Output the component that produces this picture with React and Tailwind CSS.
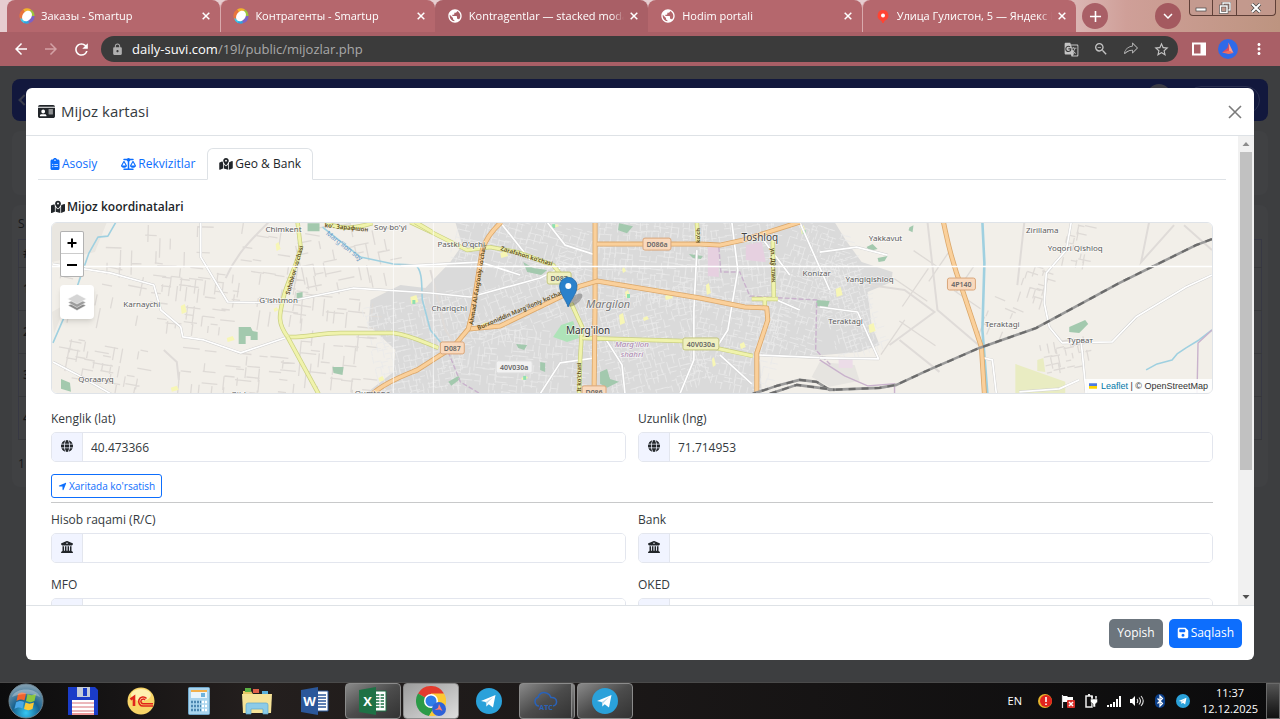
import { useId, useState } from "react";
import clsx from "clsx";
import {
  FaBuildingColumns,
  FaClipboardList,
  FaFloppyDisk,
  FaGlobe,
  FaIdCard,
  FaLocationArrow,
  FaMapLocationDot,
  FaScaleBalanced,
} from "react-icons/fa6";
import {
  MdAdd,
  MdArrowBack,
  MdArrowForward,
  MdGTranslate,
  MdKeyboardArrowDown,
  MdLock,
  MdMoreVert,
  MdOutlineZoomOut,
  MdPublic,
  MdRefresh,
  MdStarBorder,
} from "react-icons/md";
import { PiShareFatLight } from "react-icons/pi";

/* ---------- Browser chrome ---------- */

const browserTabs = [
  { title: "Заказы - Smartup", icon: "smartup" },
  { title: "Контрагенты - Smartup", icon: "smartup" },
  { title: "Kontragentlar — stacked modal", icon: "globe", active: true },
  { title: "Hodim portali", icon: "globe" },
  { title: "Улица Гулистон, 5 — Яндекс Карты", icon: "pin" },
];

function Favicon({ kind }) {
  if (kind === "globe") {
    return <MdPublic size={16} className="shrink-0 text-white" />;
  }
  if (kind === "pin") {
    return (
      <svg viewBox="0 0 16 16" className="size-4 shrink-0">
        <path d="M8 2a5.500 5.500 0 0 1 2.600 10.300c-1 .6-1.600 1.400-1.800 2.700H7.200c-.2-1.300-.8-2.100-1.800-2.700A5.500 5.500 0 0 1 8 2z" fill="#f43" />
        <circle cx="8" cy="7.400" r="2" fill="#fff" />
      </svg>
    );
  }
  return (
    <svg viewBox="0 0 16 16" className="size-4 shrink-0">
      <path d="M8 8L4 1.500A7.500 7.500 0 0 1 12 1.600z" fill="#f3b32c" />
      <path d="M8 8l4-6.400A7.500 7.500 0 0 1 15.500 8z" fill="#9cc43c" />
      <path d="M8 8h7.500A7.500 7.500 0 0 1 10 15.300z" fill="#7d62c4" />
      <path d="M8 8l2 7.300A7.500 7.500 0 0 1 2 12.500z" fill="#2fa3e0" />
      <path d="M8 8l-6 4.500A7.500 7.500 0 0 1 4 1.500z" fill="#e8743c" />
      <path d="M1 10a7 7 0 0 0 4 5l1-3z" fill="#42c7e8" />
      <ellipse cx="8" cy="8" rx="4.400" ry="5.800" transform="rotate(38 8 8)" fill="#fff" />
    </svg>
  );
}

function WindowButtons() {
  return (
    <div className="flex h-4 self-start rounded-b border border-t-0 border-[#5f4038] bg-[#c39a90]/70 text-white">
      <button aria-label="Minimize" className="flex w-[23px] items-center justify-center border-r border-[#5f4038]">
        <svg viewBox="0 0 12 10" className="h-2.5 w-3">
          <rect x="1" y="5" width="10" height="3" fill="#fff" stroke="#444" strokeWidth=".7" />
        </svg>
      </button>
      <button aria-label="Restore" className="flex w-6 items-center justify-center border-r border-[#5f4038]">
        <svg viewBox="0 0 12 12" className="size-3" fill="none">
          <path d="M4 3V1h7v7H9" stroke="#444" strokeWidth="2.600" />
          <path d="M4 3V1h7v7H9" stroke="#fff" strokeWidth="1.400" />
          <rect x="1.500" y="4" width="6.500" height="6.500" stroke="#444" strokeWidth="2.600" />
          <rect x="1.500" y="4" width="6.500" height="6.500" stroke="#fff" strokeWidth="1.500" />
        </svg>
      </button>
      <button aria-label="Close window" className="flex w-[38px] items-center justify-center">
        <svg viewBox="0 0 12 10" className="h-2.5 w-3" fill="none">
          <path d="M2 1l8 8M10 1L2 9" stroke="#444" strokeWidth="3.400" />
          <path d="M2 1l8 8M10 1L2 9" stroke="#fff" strokeWidth="2" />
        </svg>
      </button>
    </div>
  );
}

function TabStrip() {
  return (
    <div className="flex h-8 items-center bg-linear-to-r from-[#e6cdd0] from-80% via-[#cf9f98] via-88% to-[#bd9480] pr-1 pl-[7px]">
      <div className="flex h-8 w-[1069px] min-w-0 shrink">
        {browserTabs.map((tab, i) => (
          <div
            key={tab.title}
            className={clsx(
              "flex min-w-0 flex-1 items-center gap-1.5 rounded-t-lg pr-1.5 pl-3",
              tab.active ? "bg-[#a95f66]" : "bg-[#b5676d]",
              (i === 1 || i === 4) && "border-l border-[#d9a9ac]"
            )}
          >
            <Favicon kind={tab.icon} />
            <a
              href="#tab"
              className="flex-1 overflow-hidden text-[11px] leading-4 whitespace-nowrap text-white [mask-image:linear-gradient(to_right,black_92%,transparent)]"
            >
              {tab.title}
            </a>
            <button aria-label="Close tab" className="-ml-1 flex size-4 items-center justify-center text-white">
              <svg viewBox="0 0 8 8" className="size-2">
                <path d="M.7 .7l6.600 6.600M7.300 .7L.7 7.300" stroke="currentColor" strokeWidth="1.500" />
              </svg>
            </button>
          </div>
        ))}
      </div>
      <button aria-label="New tab" className="ml-1.5 flex size-[26px] items-center justify-center rounded-full bg-[#a95f66] text-white">
        <MdAdd size={19} />
      </button>
      <button aria-label="Search tabs" className="mr-2 ml-auto flex size-[26px] items-center justify-center rounded-full bg-[#a4595f] text-white">
        <MdKeyboardArrowDown size={18} />
      </button>
      <WindowButtons />
    </div>
  );
}

function Toolbar() {
  return (
    <div className="flex h-[34px] items-center bg-[#a95f66] px-3 text-white">
      <div className="flex w-[89px] items-center gap-3">
        <button aria-label="Back"><MdArrowBack size={18} /></button>
        <button aria-label="Forward" className="text-[#d3a1a5]"><MdArrowForward size={18} /></button>
        <button aria-label="Reload"><MdRefresh size={19} /></button>
      </div>
      <div className="flex h-[26px] flex-1 items-center rounded-full bg-[#3b3b3b] pr-2 pl-2.5 text-[#a9a9a9]">
        <MdLock size={13} className="mr-2 text-[#b0b0b0]" />
        <p className="flex-1 text-[13px] leading-5">
          <span className="text-white">daily-suvi.com</span>/19l/public/mijozlar.php
        </p>
        <div className="flex items-center gap-3.5 text-[#c4c4c4]">
          <button aria-label="Translate"><MdGTranslate size={15} /></button>
          <button aria-label="Zoom"><MdOutlineZoomOut size={16} /></button>
          <button aria-label="Share"><PiShareFatLight size={16} /></button>
          <button aria-label="Bookmark"><MdStarBorder size={17} /></button>
        </div>
      </div>
      <button aria-label="Side panel" className="ml-3.5">
        <svg viewBox="0 0 14 14" className="size-3.5">
          <rect x="1" y="1.500" width="12" height="11" fill="none" stroke="#fff" strokeWidth="2" />
          <rect x="8.500" y="1" width="5" height="12" fill="#fff" />
        </svg>
      </button>
      <button aria-label="Profile" className="mx-3">
        <BirdBadge className="size-5" />
      </button>
      <button aria-label="Menu"><MdMoreVert size={18} /></button>
    </div>
  );
}

function BirdBadge({ className }) {
  return (
    <svg viewBox="0 0 20 20" className={className}>
      <circle cx="10" cy="10" r="10" fill="#2f6ae8" />
      <path d="M10.500 3.500l5 10.500-4.500-2z" fill="#ff9a86" />
      <path d="M10.500 3.500L11 12l-7 1.500L9.500 9z" fill="#e5485a" />
      <path d="M4 13.500l7-2 4.500 2.500-5 1z" fill="#f0705f" />
    </svg>
  );
}

/* ---------- Map ---------- */

// small repeatable generator so the street grid stays the same on each render
function makeStreets(seed, { x, y, w, h, angle, step, keep }) {
  let s = seed;
  const rnd = () => {
    s = (s * 16807) % 2147483647;
    return s / 2147483647;
  };
  const ca = Math.cos(angle);
  const sa = Math.sin(angle);
  const cx = x + w / 2;
  const cy = y + h / 2;
  const at = (u, v) =>
    `${(cx + u * ca - v * sa).toFixed(1)} ${(cy + u * sa + v * ca).toFixed(1)}`;
  let d = "";
  for (let u = -w / 2; u < w / 2; u += step) {
    for (let v = -h / 2; v < h / 2; v += step) {
      const du = (rnd() - 0.5) * step * 0.5;
      if (rnd() < keep) d += `M${at(u + du, v)}L${at(u + du, v + step * (0.7 + rnd()))}`;
      if (rnd() < keep) d += `M${at(u, v + du)}L${at(u + step * (0.7 + rnd()), v + du)}`;
    }
  }
  return d;
}

const cityBlocks = [
  { x: 372, y: 300, w: 90, h: 96, angle: -0.2, step: 6, keep: 0.65 },
  { x: 455, y: 218, w: 140, h: 60, angle: 0.25, step: 7, keep: 0.65 },
  { x: 455, y: 270, w: 140, h: 60, angle: -0.35, step: 7, keep: 0.65 },
  { x: 455, y: 330, w: 130, h: 66, angle: 0.1, step: 7, keep: 0.65 },
  { x: 597, y: 220, w: 110, h: 80, angle: 0.08, step: 6, keep: 0.65 },
  { x: 590, y: 295, w: 110, h: 100, angle: -0.25, step: 6, keep: 0.65 },
  { x: 700, y: 220, w: 80, h: 80, angle: -0.12, step: 7, keep: 0.6 },
  { x: 695, y: 300, w: 80, h: 90, angle: 0.2, step: 6, keep: 0.65 },
  { x: 775, y: 225, w: 60, h: 130, angle: 0.3, step: 6, keep: 0.65 },
  { x: 825, y: 260, w: 50, h: 95, angle: -0.3, step: 5, keep: 0.65 },
].map((block, i) => makeStreets(i * 977 + 31, block));

const villageBlocks = [
  { x: 150, y: 270, w: 85, h: 55, angle: 0.12, step: 9, keep: 0.4 },
  { x: 105, y: 225, w: 95, h: 40, angle: 0.03, step: 13, keep: 0.25 },
  { x: 60, y: 270, w: 90, h: 50, angle: 0.2, step: 13, keep: 0.35 },
  { x: 55, y: 345, w: 90, h: 45, angle: 0.18, step: 9, keep: 0.42 },
  { x: 180, y: 355, w: 100, h: 36, angle: 0.1, step: 11, keep: 0.4 },
  { x: 238, y: 228, w: 70, h: 95, angle: 0.15, step: 12, keep: 0.4 },
  { x: 300, y: 225, w: 90, h: 60, angle: -0.2, step: 11, keep: 0.4 },
  { x: 300, y: 300, w: 70, h: 90, angle: 0.1, step: 11, keep: 0.35 },
  { x: 1025, y: 268, w: 25, h: 30, angle: 0.3, step: 7, keep: 0.5 },
  { x: 1068, y: 225, w: 25, h: 38, angle: 0.2, step: 7, keep: 0.5 },
  { x: 1045, y: 340, w: 45, h: 35, angle: -0.2, step: 7, keep: 0.4 },
  { x: 987, y: 302, w: 28, h: 35, angle: 0.4, step: 7, keep: 0.45 },
  { x: 890, y: 240, w: 60, h: 110, angle: 0.6, step: 28, keep: 0.3 },
].map((block, i) => makeStreets(i * 613 + 7, block));

const yellowRoads = [
  "M297 222L300 247C297 265 287 280 283 297S276 322 287 337C305 338 318 333 340 333H393C410 335 425 343 438 348",
  "M287 337L318 394",
  "M325 222C335 228 350 230 372 223M410 222L433 233 467 250 490 247 517 252 553 265 565 280",
  "M415 222L432 232",
  "M571 303L582 327 580 360 579 394",
  "M582 338L683 341 720 349 753 356",
  "M697 222L698 244",
  "M773 240L774 297M752 299H778M765 297V308",
];

const orangeRoads = [
  "M595 222V300L594 394",
  "M597 244L700 244 720 245 743 240 800 222",
  "M468 329L500 326 560 297 580 286 597 281 633 287 700 298 745 307 767 308 768 320 757 353 757 394",
  "M501 222C490 232 485 240 482 250L472 313 468 329 453 347 417 370C405 375 385 382 372 394",
  "M944 222C948 240 950 255 963 290L982 347 985 394",
];

const whiteRoads = [
  "M52 264L110 273 153 285 160 310 180 327 182 337 203 340 240 353 287 337",
  "M200 222V257L227 302 280 303 353 288 430 293 470 297 540 278 560 268",
  "M52 362L75 374 110 394M400 266L480 262 520 275",
  "M547 222L565 245 593 254M500 222L530 260",
  "M540 394L560 363 595 358M605 338L622 365 625 394",
  "M697 250L694 310 694 360 680 394M732 222L738 270 728 330 715 350M720 355L752 384",
  "M757 355L826 358M777 300L800 310M760 235L790 275",
  "M820 252L857 247 888 255M800 222L830 290M820 307L858 312 879 359 820 358",
  "M1072 222L1067 250 1047 273 1045 303 1050 327 1063 343 1113 342 1137 317 1187 287 1213 275",
  "M1082 342L1087 394M984 358L993 360 997 394M1020 392L1060 389 1080 380",
];

const railways = [
  "M1213 239L1197 245 1120 283 1037 328 980 348 927 371 897 385 880 388 830 390 817 382 800 380 777 386 753 394",
  "M770 394L797 385 820 388 835 390",
];

const greens = [
  "M238 327h12l2 4 5 1v8h-7v-4h-5v8h-7z",
  "M307 223h12v8h-12z",
  "M60 379l9 4 1 9-10-3z",
  "M332 367h11l-1 8-9-2z",
  "M296 293l6-1v7l-6-1z",
  "M523 262l10 6 14 2-6 5-14-3z",
  "M619 223l14 3-6 7-9-3z",
  "M600 372l7-3 3 10 9 3-12 6-7-4z",
  "M516 344l11 1-3 5-6-2z",
  "M540 362l5 1v9l-5-2z",
  "M448 382l10-6 2 3-9 7z",
  "M689 254l14 2-2 3-8-1z",
  "M817 300l13 1-2 6-12-1z",
  "M867 247l6-3 5 5-8 2zM878 258l10-2-3 5-6 1z",
  "M910 227l4-2-1 7-4-2z",
  "M1070 327l16-7 3 4-9 9-10-1z",
];

const pale = [
  [275, 242, 5, 9], [180, 304, 6, 10], [226, 336, 8, 6], [273, 307, 5, 5], [170, 386, 8, 6],
  [410, 295, 8, 9], [378, 376, 6, 6], [500, 251, 8, 7], [481, 322, 8, 5], [550, 224, 9, 4],
  [619, 313, 6, 12], [643, 316, 6, 5], [706, 283, 5, 12], [740, 342, 6, 7], [712, 357, 4, 10],
  [665, 294, 8, 6], [801, 225, 5, 9], [836, 287, 7, 10], [869, 323, 7, 10], [622, 267, 4, 6],
  [625, 290, 5, 8], [521, 376, 7, 4], [653, 288, 7, 5],
];

const places = [
  ["Chimkent", 283, 232], ["Soy bo'yi", 390, 230], ["Karnaychi", 141, 307], ["G'ishtmon", 278, 303],
  ["Qoraaryq", 95, 382], ["Pastki O'qchi", 461, 247], ["Chariqchi", 449, 311], ["Konizar", 817, 276],
  ["Yakkavut", 886, 241], ["Yangiqishloq", 870, 282], ["Teraktagi", 846, 324], ["Teraktagi", 1003, 327],
  ["Zirillama", 1043, 233], ["Yoqori Qishloq", 1076, 251], ["Турват", 1081, 343], ["Qumtepa", 372, 396],
  ["Gijda", 240, 397],
];

const shields = [
  { text: "D086a", x: 657, y: 244, fill: "#f9d9bd", stroke: "#d9a679" },
  { text: "D087", x: 452, y: 348, fill: "#f9d9bd", stroke: "#d9a679" },
  { text: "D087", x: 559, y: 278, fill: "#eff0c0", stroke: "#c3c67d" },
  { text: "40V030a", x: 701, y: 344, fill: "#eff0c0", stroke: "#c3c67d" },
  { text: "40V030a", x: 514, y: 367, fill: "#f2f2f2", stroke: "#e0e0e0" },
  { text: "D086", x: 594, y: 392, fill: "#f9d9bd", stroke: "#d9a679" },
  { text: "4P140", x: 962, y: 284, fill: "#f9d9bd", stroke: "#d9a679" },
];

function MapCanvas() {
  return (
    <svg
      viewBox="51 222 1162 172"
      preserveAspectRatio="xMidYMid slice"
      className="block size-full"
      fontFamily="'Noto Sans', sans-serif"
      fill="none"
    >
      <rect x="0" y="200" width="1280" height="220" fill="#f2efe9" />
      <path
        d="M455 222H835L846 240 862 262 893 272 892 282 868 292 872 325 880 345 860 352 800 357 760 356 762 394H365L393 372 395 350 368 325 370 300 400 285 425 288 450 262 462 245z"
        fill="#dadada"
      />
      <path d="M51 222l55 0-12 30-43 10zM51 312l14-8-12 30z" fill="#e9e6e0" />
      <path d="M820 362l35 3 5 16-30 6-18-10z" fill="#e6e4e0" />

      {villageBlocks.map((d, i) => (
        <path key={i} d={d} stroke="#dedad6" strokeWidth="1.300" />
      ))}
      {cityBlocks.map((d, i) => (
        <path key={i} d={d} stroke="#eaeaea" strokeWidth=".8" />
      ))}
      <path
        d="M225 278C235 255 250 240 268 222M430 270L445 330 460 352M928 222L938 310 985 350M1150 222L1142 262 1175 225M890 345L935 312 905 290 870 285M900 340L940 372M1018 285L1025 222M1185 225L1213 250M163 350L176 362 178 380"
        stroke="#dfdbd8"
        strokeWidth="2"
      />

      <path d="M708 246l11 1v30l-11-1z" fill="#e6d0e0" />
      <path d="M746 245l16-3 4 20-20-2z" fill="#e6d0e0" />
      <path d="M839 359h14v9h-14z" fill="#ecdce8" />
      <path d="M1016 364l50 18v12h-50zM1038 360l6-2 2 14-8-1z" fill="#e9ecc2" />
      <path d="M561 325l12-4 6 17-12 4-14-5z" fill="#aee3b8" />
      {greens.map((d) => (
        <path key={d} d={d} fill="#a3c9ae" />
      ))}
      {pale.map(([x, y, w, h]) => (
        <g key={`${x}-${y}`}>
          <path d={`M${x} ${y + 2}l${w - 2}-2 2 ${h - 2}-${w - 1} 2z`} fill="#f7f6b5" />
          {(x + y) % 3 === 0 && <rect x={x + 2} y={y + h - 4} width="3" height="4" fill="#8fe0b0" />}
        </g>
      ))}

      <g stroke="#9fd0e0" strokeWidth="1.600" strokeLinejoin="round">
        <path d="M115 222L107 236 97 237 88 253 75 290 52 343" />
        <path d="M322 227L360 257 393 264 415 265C423 270 421 290 422 300L430 330 445 348" />
        <path d="M1147 370L1158 364 1173 360 1178 354 1187 348 1200 340 1213 330" />
        <path d="M983 222L985 263 983 330 988 394" strokeWidth="2.600" />
      </g>

      <g stroke="#c9b2cc" strokeWidth="1.400">
        <path d="M719 247L721 272 740 272 750 296 817 300 816 350 832 366" strokeDasharray="5 2" />
        <path d="M448 352L460 382 480 394" strokeDasharray="5 2" />
        <path d="M820 360L845 376 868 386 895 384V394M1213 330L1199 343 1198 394" />
      </g>

      {whiteRoads.map((d) => (
        <g key={d} strokeLinejoin="round">
          <path d={d} stroke="#cfcfcf" strokeWidth="2.600" />
          <path d={d} stroke="#fff" strokeWidth="1.700" />
        </g>
      ))}
      {yellowRoads.map((d) => (
        <g key={d} strokeLinejoin="round">
          <path d={d} stroke="#c9cf80" strokeWidth="4.400" />
          <path d={d} stroke="#f0f3ac" strokeWidth="3" />
        </g>
      ))}
      {orangeRoads.map((d) => (
        <g key={d} strokeLinejoin="round">
          <path d={d} stroke="#dba76a" strokeWidth="5" />
          <path d={d} stroke="#fad09b" strokeWidth="3.400" />
        </g>
      ))}
      {railways.map((d) => (
        <g key={d} strokeLinejoin="round">
          <path d={d} stroke="#9a9a9a" strokeWidth="2.600" />
          <path d={d} stroke="#6b6b6b" strokeWidth="2.200" strokeDasharray="7 6" />
        </g>
      ))}

      {/* street names along the roads */}
      <g fill="#5b4a1c" fontSize="6" fontWeight="600">
        <text transform="translate(289 295) rotate(-74)">Sohibkor ko'chasi</text>
        <text transform="translate(324 227) rotate(6)">ko'. Зарафшон</text>
        <text transform="translate(500 250) rotate(17)">Zarafshon ko'chasi</text>
        <text transform="translate(473 325) rotate(-81)">Ahmad Al-Farg'oniy ko'chasi</text>
        <text transform="translate(478 330) rotate(-23)">Burxoniddin Marg'iloniy ko'chasi</text>
        <text transform="translate(581 392) rotate(-90)">It ko'chasi</text>
        <text transform="translate(700 243) rotate(-90)">ko'ch</text>
        <text transform="translate(771 248) rotate(88)">ул. Дўстлик</text>
      </g>
      <text transform="translate(325 234) rotate(38)" fontSize="7" fill="#6b9cc9">Marg'ilon soy</text>

      {/* tile seams */}
      <path d="M51 266.500H1213" stroke="#fff" strokeWidth="1.500" />
      <path d="M393 222V394M433 222V394" stroke="#fff" strokeWidth="1" opacity=".7" />

      {shields.map((s) => {
        const w = s.text.length * 4 + 8;
        return (
          <g key={`${s.text}-${s.x}`}>
            <rect x={s.x - w / 2} y={s.y - 6} width={w} height="12" rx="2" fill={s.fill} stroke={s.stroke} />
            <text x={s.x} y={s.y + 3} fontSize="7" fontWeight="600" textAnchor="middle" fill="#666">
              {s.text}
            </text>
          </g>
        );
      })}

      <g textAnchor="middle" fontSize="8" fill="#5c5c5c" stroke="#fff" strokeOpacity=".6" strokeWidth="1.500" paintOrder="stroke">
        {places.map(([name, x, y]) => (
          <text key={`${name}-${x}`} x={x} y={y}>{name}</text>
        ))}
        <text x="760" y="241" fontSize="10" fill="#444">Toshloq</text>
        <text x="608" y="308" fontSize="11" fontStyle="italic" fill="#777">Margilon</text>
        <text x="588" y="334" fontSize="10" fill="#333">Marg'ilon</text>
        <text x="632" y="347" fontStyle="italic" fill="#a982ad">Marg'ilon</text>
        <text x="632" y="357" fontStyle="italic" fill="#a982ad">shahri</text>
      </g>

      {/* marker */}
      <ellipse cx="575" cy="300" rx="9" ry="4" transform="rotate(-40 575 300)" fill="#000" opacity=".25" />
      <path
        d="M568 307C566 300 559.500 294 559.500 286a8.700 8.700 0 0 1 17.400 0C577 294 570 300 568 307z"
        fill="#2a81cb"
        stroke="#1f6aab"
        strokeWidth=".8"
      />
      <circle cx="568.200" cy="286" r="3" fill="#fff" />
    </svg>
  );
}

function LocationMap() {
  return (
    <div className="relative h-[172px] overflow-hidden rounded-md border border-[#dfe3e8]">
      <MapCanvas />
      <div className="absolute top-2 left-2 flex flex-col items-start gap-2">
        <div className="flex w-6 flex-col rounded-xs border border-black/30 bg-white text-black">
          <button aria-label="Zoom in" className="flex h-[22px] items-center justify-center border-b border-[#ccc]">
            <svg viewBox="0 0 10 10" className="size-2.5">
              <path d="M5 .5v9M.5 5h9" stroke="#000" strokeWidth="2" />
            </svg>
          </button>
          <button aria-label="Zoom out" className="flex h-[22px] items-center justify-center">
            <svg viewBox="0 0 10 10" className="size-2.5">
              <path d="M0 5h10" stroke="#000" strokeWidth="2" />
            </svg>
          </button>
        </div>
        <button aria-label="Layers" className="flex size-[34px] items-center justify-center rounded-sm bg-white shadow-md">
          <svg viewBox="0 0 20 20" className="size-5">
            <path d="M10 9l9 4.500-9 5-9-5z" fill="#8a8a8a" stroke="#fff" strokeWidth=".5" />
            <path d="M10 6l9 4.500-9 5-9-5z" fill="#9d9d9d" stroke="#fff" strokeWidth=".5" />
            <path d="M10 2l9.500 5-9.500 5-9.500-5z" fill="#d5d5d5" stroke="#fff" strokeWidth=".5" />
          </svg>
        </button>
      </div>
      <div className="absolute right-0 bottom-0 flex items-center gap-1 bg-white/85 px-1 font-['Liberation_Sans',sans-serif] text-[9px] leading-[14px] text-[#333]">
        <svg viewBox="0 0 9 6" className="h-1.5 w-2">
          <path d="M0 0h9v3H0z" fill="#4c7be1" />
          <path d="M0 3h9v3H0z" fill="#ffd500" />
        </svg>
        <p>
          <a href="#leaflet" className="text-[#0078a8]">Leaflet</a> | © OpenStreetMap
        </p>
      </div>
    </div>
  );
}

/* ---------- Modal ---------- */

const cardTabs = [
  { id: "main", label: "Asosiy", icon: FaClipboardList, iconClass: "w-2.5" },
  { id: "req", label: "Rekvizitlar", icon: FaScaleBalanced, iconClass: "w-[15px]" },
  { id: "geo", label: "Geo & Bank", icon: FaMapLocationDot, iconClass: "w-3.5" },
];

function Field({ label, icon: Icon, defaultValue = "" }) {
  const id = useId();
  return (
    <div>
      <label htmlFor={id} className="mb-1 block text-xs leading-[18px] text-[#343a40]">
        {label}
      </label>
      <div className="flex h-[30px] overflow-hidden rounded-[5px] border border-[#e3e6ee]">
        <span className="flex w-[31px] shrink-0 items-start justify-center border-r border-[#e3e6ee] bg-[#f1f4ff] pt-[7px] text-[#212529]">
          {Icon && <Icon size={12} />}
        </span>
        <input
          id={id}
          type="text"
          defaultValue={defaultValue}
          className="min-w-0 flex-1 bg-white px-2 pt-0.5 text-xs text-[#343a40] outline-none"
        />
      </div>
    </div>
  );
}

function ScrollBar() {
  return (
    <div className="flex w-4 shrink-0 flex-col items-center bg-[#f1f1f1]">
      <svg viewBox="0 0 16 16" className="size-4 shrink-0">
        <path d="M8 6l3.500 4h-7z" fill="#8c8c8c" />
      </svg>
      <div className="w-3 flex-[319] bg-[#c1c1c1]" />
      <div className="flex-[119]" />
      <svg viewBox="0 0 16 16" className="size-4 shrink-0">
        <path d="M8 10L4.500 6h7z" fill="#505050" />
      </svg>
    </div>
  );
}

function ClientCardModal() {
  const [tab, setTab] = useState("geo");

  return (
    <section
      role="dialog"
      aria-label="Mijoz kartasi"
      className="flex min-h-0 flex-1 flex-col overflow-hidden rounded-md bg-white text-[#212529]"
    >
      <header className="flex h-12 shrink-0 items-center justify-between border-b border-[#dee2e6] px-3">
        <h5 className="flex items-center gap-1.5 text-[15px] text-[#343a40]">
          <FaIdCard size={17} className="text-[#212529]" />
          Mijoz kartasi
        </h5>
        <button aria-label="Yopish" className="text-[#7b7b7b]">
          <svg viewBox="0 0 14 14" className="size-3.5">
            <path d="M1 1l12 12M13 1L1 13" stroke="currentColor" strokeWidth="1.600" />
          </svg>
        </button>
      </header>

      <div className="flex min-h-0 flex-1">
        <div className="min-w-0 flex-1 overflow-hidden p-3">
          <nav className="flex h-8 border-b border-[#dee2e6]">
            {cardTabs.map(({ id, label, icon: Icon, iconClass }) => (
              <button
                key={id}
                onClick={() => setTab(id)}
                className={clsx(
                  "-mb-px flex items-center gap-0.5 rounded-t-md border px-[11px] text-xs",
                  tab === id
                    ? "border-[#dee2e6] border-b-white bg-white text-[#212529]"
                    : "border-transparent text-[#0d6efd]"
                )}
              >
                <Icon className={clsx("h-3", iconClass)} />
                {label}
              </button>
            ))}
          </nav>

          <div className="px-[13px] pt-[18px]">
            <h6 className="mb-1.5 flex items-center gap-0.5 text-xs leading-[18px] font-semibold">
              <FaMapLocationDot size={14} />
              Mijoz koordinatalari
            </h6>
            <LocationMap />

            <div className="mt-4 grid grid-cols-2 gap-3">
              <Field label="Kenglik (lat)" icon={FaGlobe} defaultValue="40.473366" />
              <Field label="Uzunlik (lng)" icon={FaGlobe} defaultValue="71.714953" />
            </div>
            <button className="mt-3 flex h-6 items-center gap-0.5 rounded-[3px] border border-[#0d6efd] px-1.5 text-[10px] text-[#0d6efd]">
              <FaLocationArrow size={9} />
              Xaritada ko'rsatish
            </button>
            <hr className="mt-1 mb-2 border-[#c8c9ca]" />
            <div className="grid grid-cols-2 gap-x-3 gap-y-[13px]">
              <Field label="Hisob raqami (R/C)" icon={FaBuildingColumns} />
              <Field label="Bank" icon={FaBuildingColumns} />
              <Field label="MFO" />
              <Field label="OKED" />
            </div>
          </div>
        </div>
        <ScrollBar />
      </div>

      <footer className="flex h-[55px] shrink-0 items-center justify-end gap-1.5 border-t border-[#dee2e6] px-3 text-xs text-white">
        <button className="h-[29px] rounded-[5px] bg-[#6c757d] px-2">Yopish</button>
        <button className="flex h-[29px] items-center gap-0.5 rounded-[5px] bg-[#0d6efd] px-2">
          <FaFloppyDisk size={12} />
          Saqlash
        </button>
      </footer>
    </section>
  );
}

/* ---------- Page under the backdrop ---------- */

function DimmedPage() {
  return (
    <div className="flex h-full flex-col gap-2.5 overflow-hidden bg-[#3d3e40] px-3 pt-[13px] text-xs text-[#17181a]">
      <div className="flex h-[42px] shrink-0 items-center justify-between rounded-lg bg-[#12183d] px-2">
        <span className="size-2 rotate-45 border-b-2 border-l-2 border-[#3a3d4c]" />
        <div className="flex h-8 items-center gap-4">
          <span className="size-6 self-start rounded-full bg-[#3b3c45]" />
          <span className="h-7 w-[73px] rounded-full border border-[#2a3050]" />
        </div>
      </div>
      <div className="h-16 shrink-0 rounded-lg bg-[#404143]" />
      <div className="h-[282px] shrink-0 rounded-lg bg-[#404143] px-1.5">
        <p className="pt-2.5 leading-[18px]">S</p>
        <table className="mt-1.5 w-full border border-[#373843]">
          <tbody>
            {["#", "1", "2", "3", "4"].map((n) => (
              <tr key={n} className="border-b border-[#37383b]">
                <td className={clsx("px-1 font-semibold", n === "#" ? "h-7" : "h-[43px]")}>{n}</td>
              </tr>
            ))}
          </tbody>
        </table>
        <p className="mt-4">1</p>
      </div>
    </div>
  );
}

/* ---------- Taskbar ---------- */

function TelegramIcon({ className }) {
  return (
    <svg viewBox="0 0 26 26" className={className}>
      <circle cx="13" cy="13" r="13" fill="#2aa1da" />
      <path d="M5 13l14.500-6L17 19.500l-4.300-3.200-2.300 2.200-.6-4.500z" fill="#fff" />
      <path d="M9.800 14l7.400-5-5.800 6-.9 3.500z" fill="#b5d8ea" />
    </svg>
  );
}

function StartIcon() {
  return (
    <svg viewBox="0 0 36 36" className="size-9">
      <defs>
        <radialGradient id="orb" cx="50%" cy="85%" r="80%">
          <stop offset="0" stopColor="#35c8f5" />
          <stop offset=".5" stopColor="#19628f" />
          <stop offset="1" stopColor="#7d9caf" />
        </radialGradient>
      </defs>
      <circle cx="18" cy="18" r="17" fill="url(#orb)" stroke="#6f8490" />
      <path d="M10 11c3-2 5-2 8-.5l-1.500 7c-3-1.500-5-1.500-8 .500z" fill="#f0642c" />
      <path d="M19.500 11c3 1.500 5 1.500 8.500 0l-1.500 7c-3 1.500-5.500 1.500-8.500 0z" fill="#8cc63f" />
      <path d="M8 19.500c3-2 5-2 8-.5l-1.500 6.500c-3-1.500-5-1.500-8 .5z" fill="#4aa8e8" />
      <path d="M17.500 19.500c3 1.500 5 1.500 8.500 0L24.500 26c-3 1.500-5.500 1.500-8.500 0z" fill="#fcc934" />
      <path d="M4 14C7 4 29 4 32 14c-9-4-19-4-28 0z" fill="#fff" opacity=".3" />
    </svg>
  );
}

function FloppyIcon() {
  return (
    <svg viewBox="0 0 30 30" className="size-[30px]">
      <path d="M0 1h27l3 3v25H0z" fill="#1a3cc8" />
      <path d="M9 1h13v10H9z" fill="#c5ccd8" />
      <path d="M15 2h4v8h-4z" fill="#1a3cc8" />
      <path d="M4 14h22v15H4z" fill="#fff" />
      <path d="M4 17h22M4 21h22M4 25h22" stroke="#d87078" />
      <path d="M4 28h22" stroke="#d33" />
    </svg>
  );
}

function OneCIcon() {
  return (
    <svg viewBox="0 0 28 28" className="size-7">
      <circle cx="14" cy="14" r="13.500" fill="#f8d568" />
      <ellipse cx="14" cy="8" rx="10" ry="6" fill="#fff0b0" />
      <g stroke="#e0241b" fill="none">
        <path d="M3.500 12.500L7 10v9" strokeWidth="2.600" />
        <path d="M19.500 11.500a4.500 4.500 0 1 0-3 7.500H26" strokeWidth="1.600" />
        <path d="M18 13a2.300 2.300 0 1 0-1.500 3.700H26" strokeWidth="1.500" />
      </g>
    </svg>
  );
}

function CalcIcon() {
  return (
    <svg viewBox="0 0 22 28" className="h-7 w-[22px]">
      <rect x=".5" y=".5" width="21" height="27" rx="1" fill="#a9d4ee" stroke="#6fa6c9" />
      <rect x="3" y="3" width="16" height="8" fill="#eaf5fb" />
      <rect x="3" y="3" width="16" height="2" fill="#f2b04c" />
      <rect x="13" y="6" width="4" height="4" fill="#6fb3dd" />
      <path d="M3 15h10M3 19h10M3 23h10" stroke="#4c86b0" strokeWidth="2.500" strokeDasharray="2 1" />
      <path d="M14 15h6M14 19h6M14 23h6" stroke="#fff" strokeWidth="2.500" strokeDasharray="2 1" />
    </svg>
  );
}

function FolderIcon() {
  return (
    <svg viewBox="0 0 30 28" className="h-7 w-[30px]">
      <path d="M1 4h8l2 3h18v19H1z" fill="#e8c866" />
      <path d="M3 1h6v4H3z" fill="#5bb043" />
      <path d="M11 2h6v4h-6z" fill="#e06048" />
      <path d="M20 4h6v3h-6z" fill="#5ab2dc" />
      <path d="M0 7h30l-1 19H1z" fill="#f6e398" />
      <path d="M4 27V18q0-2 2-2h18q2 0 2 2v9h-5v-5H9v5z" fill="#8ccbe8" stroke="#5ba6cc" strokeWidth=".7" />
    </svg>
  );
}

// Word and Excel share one shape: a tinted cover with a letter and a sheet behind it
function OfficeIcon({ letter, color }) {
  return (
    <svg viewBox="0 0 28 28" className="size-7" fontFamily="'Open Sans', sans-serif">
      <path d="M14 4h13v20H14z" fill="#fff" stroke={color} />
      <path d="M17 8h8M17 11h8M17 14h8M17 17h8M17 20h8" stroke={color} strokeWidth="1.400" />
      {letter === "X" && <path d="M21 5v18" stroke="#fff" strokeWidth="1.200" />}
      <path d="M0 3l17-3v28L0 25z" fill={color} />
      <text x="8.500" y="19" fontSize="13" fontWeight="700" fill="#fff" textAnchor="middle">{letter}</text>
    </svg>
  );
}

function ChromeIcon() {
  return (
    <svg viewBox="0 0 30 30" className="size-[30px]">
      <path d="M15 15L2 7.500A15 15 0 0 1 28 7.500z" fill="#e33b2e" />
      <path d="M15 15L2 7.500A15 15 0 0 0 13 29.900L21 17z" fill="#2b9a47" />
      <path d="M15 15l6 2-8 12.900A15 15 0 0 0 28 7.500H15z" fill="#fcc934" />
      <circle cx="15" cy="15" r="7" fill="#fff" />
      <circle cx="15" cy="15" r="5.500" fill="#2f7de8" />
      <circle cx="23" cy="23" r="7" fill="#2f62d8" />
      <path d="M23 18l3.500 7-3-1.500-5 .500 3.500-2z" fill="#ff7d6e" />
    </svg>
  );
}

function CloudIcon() {
  return (
    <svg viewBox="0 0 24 20" className="h-5 w-6" fill="none" fontFamily="'Open Sans', sans-serif">
      <path d="M5 15a4.500 4.500 0 0 1-1-8.700C5 2 9 .5 12.500 2c3 1 4 3 4.500 4.500 7-.5 7 8 2 8.500" stroke="#2a62b8" strokeWidth="1.500" />
      <text x="12" y="18.500" fontSize="7" fontWeight="700" fill="#2a62b8" textAnchor="middle">ATC</text>
    </svg>
  );
}

const taskbarApps = [
  { name: "Start", icon: <StartIcon /> },
  { name: "Total Commander", icon: <FloppyIcon /> },
  { name: "1C", icon: <OneCIcon /> },
  { name: "Calculator", icon: <CalcIcon /> },
  { name: "Explorer", icon: <FolderIcon /> },
  { name: "Word", icon: <OfficeIcon letter="W" color="#2b579a" /> },
  { name: "Excel", icon: <OfficeIcon letter="X" color="#1e7145" />, open: true },
  { name: "Chrome", icon: <ChromeIcon />, open: true, active: true },
  { name: "Telegram", icon: <TelegramIcon className="size-[26px]" /> },
  { name: "ATC", icon: <CloudIcon />, open: true, stacked: true },
  { name: "Telegram 2", icon: <TelegramIcon className="size-[26px]" />, open: true },
];

function Tray() {
  return (
    <div className="mr-1 flex items-center gap-2">
      <span className="mr-2 text-[11px]">EN</span>
      <div className="flex items-center gap-[9px]">
        <svg viewBox="0 0 14 14" className="size-3.5">
          <circle cx="7" cy="7" r="7" fill="#e8b52c" />
          <circle cx="8" cy="7" r="6" fill="#e0231e" />
          <path d="M8 3v5M8 9.500v1.500" stroke="#fff" strokeWidth="1.600" />
        </svg>
        <svg viewBox="0 0 14 14" className="size-3.5">
          <path d="M1.500 1v13" stroke="#ddd" strokeWidth="1.200" />
          <path d="M2 2h4l1 1h5v6H7L6 8H2z" fill="#fff" />
          <rect x="6" y="6" width="8" height="8" rx="1" fill="#d8302a" />
          <path d="M8 8l4 4M12 8l-4 4" stroke="#fff" strokeWidth="1.500" />
        </svg>
        <svg viewBox="0 0 14 14" className="size-3.5" fill="none">
          <path d="M2 2h6v11H2zM4 .8h2" stroke="#eee" strokeWidth="1.500" />
          <path d="M8 2v3M12 2v3" stroke="#fff" strokeWidth="1.400" />
          <path d="M6.500 5h7v3l-2 2v3H9v-3L6.500 8z" fill="#fff" stroke="#111" strokeWidth=".5" />
        </svg>
        <svg viewBox="0 0 14 14" className="size-3.5">
          <path d="M0 13h2v-2H0zM3 13h2v-3H3zM6 13h2V8H6zM9 13h2V5H9zM12 13h2V2h-2z" fill="#fff" />
        </svg>
        <svg viewBox="0 0 14 14" className="size-3.5" fill="none">
          <path d="M0 5h2l3-3v10L2 9H0z" fill="#fff" />
          <path d="M7 5q1.500 2 0 4M9 3.500q3 3.500 0 7M11 2q4.500 5 0 10" stroke="#ddd" strokeWidth="1.100" />
        </svg>
        <svg viewBox="0 0 14 14" className="size-3.5" fill="none">
          <rect x="2" width="10" height="14" rx="5" fill="#0b3f8a" />
          <path d="M4.500 4.500l5 5L7 12V2l2.500 2.500-5 5" stroke="#fff" strokeWidth="1.200" />
        </svg>
        <TelegramIcon className="size-3.5" />
      </div>
      <time className="w-16 text-center text-[11px] leading-4">
        11:37
        <br />
        12.12.2025
      </time>
    </div>
  );
}

function Taskbar() {
  return (
    <div className="flex h-[37px] shrink-0 items-stretch justify-between border-t border-[#4a4a4a] bg-linear-to-r from-[#0c0c0d] via-[#241f1e] via-20% to-[#0b0b0c] text-white">
      <div className="flex">
        {taskbarApps.map((app, i) => (
          <button
            key={app.name}
            aria-label={app.name}
            className={clsx(
              "flex items-center justify-center",
              i === 0 ? "mr-1 w-[51px]" : "mr-0.5 w-14",
              app.open && "rounded-sm border border-[#8b8b8b]",
              app.open && !app.active && "bg-linear-to-br from-[#8a8a8a] via-[#4c4c4c] to-[#333]",
              app.active && "bg-linear-to-br from-[#9c9c9c] to-[#dedede]",
              app.stacked && "border-r-4 border-double"
            )}
          >
            {app.icon}
          </button>
        ))}
      </div>
      <div className="flex">
        <Tray />
        <button aria-label="Show desktop" className="w-3.5 border border-[#6a6a6a] bg-linear-to-b from-[#555] to-[#111]" />
      </div>
    </div>
  );
}

export default function App() {
  return (
    <div className="flex h-screen flex-col overflow-hidden bg-black font-['Open_Sans','Noto_Sans',sans-serif]">
      <TabStrip />
      <Toolbar />
      <main className="relative min-h-0 flex-1">
        <DimmedPage />
        <div className="absolute inset-0 flex px-[26px] py-[22px]">
          <ClientCardModal />
        </div>
      </main>
      <Taskbar />
    </div>
  );
}
